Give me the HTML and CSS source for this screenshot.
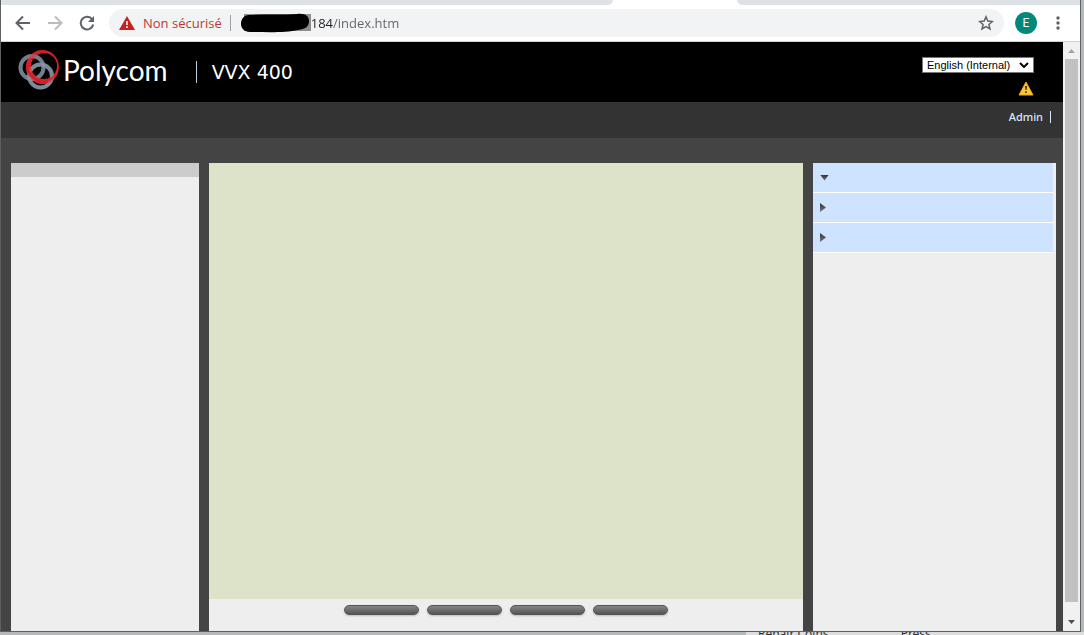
FILE: index.html
```html
<!DOCTYPE html>
<html lang="fr">
<head>
<meta charset="UTF-8">
<meta name="viewport" content="width=device-width, initial-scale=1.0">
<title>Polycom VVX 400</title>
<link rel="stylesheet" href="styles.css">
</head>
<body>

<div class="window">
    <div class="tabs">
        <div class="tab-left"></div>
        <div class="tab-right"></div>
    </div>

    <div class="toolbar">
        <button class="tool" aria-label="Back">
            <svg width="16" height="16" viewBox="0 0 16 16" fill="none" stroke="#5f6368" stroke-width="2"><path d="M15 8H2M8 1.500L1.500 8L8 14.500"/></svg>
        </button>
        <button class="tool" aria-label="Forward">
            <svg width="16" height="16" viewBox="0 0 16 16" fill="none" stroke="#babcbe" stroke-width="2"><path d="M1 8H14M8 1.500L14.500 8L8 14.500"/></svg>
        </button>
        <button class="tool" aria-label="Reload">
            <svg width="16" height="16" viewBox="0 0 16 16"><path d="M13.200 4.500A6.300 6.300 0 1 0 14.200 9.500" fill="none" stroke="#5f6368" stroke-width="2"/><path d="M15 1V7H9Z" fill="#5f6368"/></svg>
        </button>
        <div class="address">
            <svg class="danger" width="16" height="14" viewBox="0 0 16 14"><path d="M8 0L16 14H0Z" fill="#c5221f"/><path d="M7.200 5h1.600v4H7.200zM7.200 10.300h1.600v1.700H7.200z" fill="#fff"/></svg>
            <label class="insecure" for="url">Non sécurisé</label>
            <span class="divider"></span>
            <svg class="masked" width="70" height="20" viewBox="0 0 70 20"><path d="M3 1H70V18H3Z" fill="#8d8d8d"/><path d="M8 2C25 1 45 2 56 1C65 0 68 4 68 8C68 14 64 16 57 17C45 20 25 19 9 19C3 19 0 15 0 11C0 6 3 2 8 2Z" fill="#000"/></svg>
            <input class="url" id="url" type="text" value="184/index.htm">
            <button class="star" aria-label="Bookmark">
                <svg width="16" height="16" viewBox="0 0 16 16" fill="none" stroke="#5f6368" stroke-width="1.500"><path d="M8 1.800L9.800 6.100L14.400 6.500L10.900 9.500L12 14L8 11.600L4 14L5.100 9.500L1.600 6.500L6.200 6.100Z"/></svg>
            </button>
        </div>
        <button class="avatar">E</button>
        <button class="menu" aria-label="Menu">
            <svg width="4" height="14" viewBox="0 0 4 14" fill="#5f6368"><circle cx="2" cy="2" r="1.700"/><circle cx="2" cy="7" r="1.700"/><circle cx="2" cy="12" r="1.700"/></svg>
        </button>
    </div>

    <div class="view">
        <div class="page">
            <header class="header">
                <svg class="logo" width="42" height="40" viewBox="0 0 42 40" fill="none">
                    <circle cx="14" cy="17.500" r="11.500" stroke="#5d6976" stroke-width="4"/>
                    <circle cx="22.500" cy="26" r="11.500" stroke="#6d7a87" stroke-width="4"/>
                    <path fill-rule="evenodd" d="M24.500 0A16.500 17 0 1 1 24.400 0ZM26 3A13 13 0 1 0 26.100 3Z" fill="#d31f27"/>
                    <circle cx="14" cy="17.500" r="11.500" stroke="#9fb0c0" stroke-opacity=".3" stroke-width="4"/>
                    <circle cx="22.500" cy="26" r="11.500" stroke="#9fb0c0" stroke-opacity=".3" stroke-width="4"/>
                    <path d="M9 12C7 22 14 33 25 32C30 32 35 29 37 25C31 31 21 31 15 25C11 21 9 17 9 12Z" fill="#d31f27"/>
                </svg>
                <span class="brand">Polycom</span>
                <h1 class="model">VVX 400</h1>
                <div class="header-right">
                    <div class="language">
                        <select aria-label="Language">
                            <option>English (Internal)</option>
                        </select>
                        <svg class="chevron" width="10" height="6" viewBox="0 0 10 6"><path d="M1 1L5 5L9 1" fill="none" stroke="#000" stroke-width="2"/></svg>
                    </div>
                    <svg class="warning" width="16" height="15" viewBox="0 0 16 15"><path d="M8 1L15 14H1Z" fill="#fdc52f" stroke="#e9a820" stroke-linejoin="round"/><path d="M7 5h2l-.4 4H7.400zM7.200 10.300h1.600v1.700H7.200z" fill="#333"/></svg>
                </div>
            </header>

            <nav class="nav">
                <a href="#">Admin</a>
            </nav>

            <main class="content">
                <aside class="left">
                    <div class="left-title"></div>
                </aside>
                <section class="center">
                    <div class="canvas"></div>
                    <div class="buttons">
                        <button class="pill" aria-label="Cancel"></button>
                        <button class="pill" aria-label="Reset"></button>
                        <button class="pill" aria-label="View"></button>
                        <button class="pill" aria-label="Save"></button>
                    </div>
                </section>
                <aside class="right">
                    <button class="section open" aria-label="Section 1"></button>
                    <button class="section" aria-label="Section 2"></button>
                    <button class="section" aria-label="Section 3"></button>
                </aside>
            </main>
        </div>

        <div class="scrollbar">
            <svg width="17" height="17" viewBox="0 0 17 17"><path d="M5 11L8.500 7L12 11Z" fill="#a3a3a3"/></svg>
            <div class="thumb"></div>
            <svg width="17" height="20" viewBox="0 0 17 20"><path d="M5 9L8.500 13L12 9Z" fill="#505050"/></svg>
        </div>
    </div>
</div>

<!-- window lying behind the browser -->
<div class="behind">
    <div class="behind-page">
        <span>Repair Coins</span>
        <span>Press</span>
    </div>
</div>

</body>
</html>
```
FILE: styles.css
```css
* {
    box-sizing: border-box;
}

body {
    display: flex;
    flex-direction: column;
    height: 100vh;
    margin: 0;
    overflow: hidden;
    background-color: #b4b9bc;
    font-family: "Open Sans", "Noto Sans", sans-serif;
}

button {
    padding: 0;
    border: none;
    background: none;
    cursor: pointer;
}

svg {
    display: block;
    flex: none;
}

.window {
    display: flex;
    flex: 1;
    flex-direction: column;
    min-height: 0;
    margin-right: 3px;
    border: 1px solid #5d6163;
    border-top: none;
    background-color: #fff;
}

/* browser bars */
.tabs {
    display: flex;
    justify-content: space-between;
    height: 5px;
}

.tab-left,
.tab-right {
    background-color: #dee1e6;
}

.tab-left {
    flex: 612;
    margin-right: 124px;
    border-bottom-right-radius: 5px;
}

.tab-right {
    flex: 343;
    border-bottom-left-radius: 5px;
}

.toolbar {
    display: flex;
    align-items: center;
    height: 37px;
    padding: 0 20px 0 14px;
    border-bottom: 1px solid #d0d2d4;
}

.tool {
    margin-right: 16px;
}

.tool:nth-child(3) {
    margin-right: 14px;
}

.address {
    display: flex;
    flex: 1;
    align-items: center;
    height: 28px;
    padding: 0 10px;
    border-radius: 14px;
    background-color: #f1f3f4;
    font-size: 13px;
}

.insecure {
    margin-left: 8px;
    color: #b93a32;
    white-space: nowrap;
}

.divider {
    width: 1px;
    height: 16px;
    margin: 0 10px 0 8px;
    background-color: #9aa0a6;
}

.url {
    flex: 1;
    min-width: 0;
    padding: 0;
    border: none;
    outline: none;
    /* host part is darker than the path */
    background: linear-gradient(90deg, #202124 22px, #5f6368 22px);
    -webkit-background-clip: text;
    background-clip: text;
    color: transparent;
    font: inherit;
}

.avatar {
    width: 22px;
    height: 22px;
    margin: 0 19px 0 11px;
    border-radius: 50%;
    background-color: #00897b;
    color: #fff;
    font: 12px Roboto, sans-serif;
}

/* phone web page */
.view {
    display: flex;
    flex: 1;
    min-height: 0;
}

.page {
    display: flex;
    flex: 1;
    flex-direction: column;
    background-color: #444;
}

.header {
    display: flex;
    align-items: center;
    height: 60px;
    padding: 0 29px 0 17px;
    background-color: #000;
    color: #fff;
}

.logo {
    margin-bottom: 4px;
}

.brand {
    margin-left: 3px;
    padding-bottom: 4px;
    font: 28px Lato, sans-serif;
}

.model {
    margin: 0 0 0 28px;
    padding-left: 15px;
    border-left: 1px solid #b9cde0;
    font: 19px/22px "DejaVu Sans", sans-serif;
}

.header-right {
    display: flex;
    flex-direction: column;
    align-items: flex-end;
    gap: 8px;
    margin-left: auto;
    padding-top: 8px;
}

.language {
    position: relative;
}

.language select {
    display: block;
    width: 112px;
    height: 16px;
    padding: 0 4px;
    border: 1px solid #767676;
    border-radius: 0;
    appearance: none;
    background-color: #fff;
    color: #000;
    font: 11px "Liberation Sans", sans-serif;
}

.chevron {
    position: absolute;
    top: 5px;
    right: 5px;
    pointer-events: none;
}

.nav {
    display: flex;
    justify-content: flex-end;
    height: 36px;
    padding: 9px 12px 0 0;
    background-color: #333;
}

.nav a {
    height: 12px;
    padding-right: 7px;
    border-right: 1px solid #d6e8fa;
    color: #d6e8fa;
    font: 500 11px/12px "Noto Sans", sans-serif;
    text-decoration: none;
}

.content {
    display: flex;
    flex: 1;
    gap: 10px;
    padding: 25px 7px 0 10px;
}

.left,
.center,
.right {
    background-color: #eee;
}

.left {
    width: 188px;
}

.left-title {
    height: 14px;
    background-color: #ccc;
}

.center {
    display: flex;
    flex: 1;
    flex-direction: column;
}

.canvas {
    flex: 1;
    background-color: #dde3c8;
}

.buttons {
    display: flex;
    justify-content: center;
    gap: 8px;
    height: 32px;
    padding-top: 6px;
}

.pill {
    width: 75px;
    height: 10px;
    border: 1px solid #555;
    border-radius: 5px;
    background: linear-gradient(#858585, #555);
    box-shadow: 0 1px 2px #bbb;
}

.right {
    width: 243px;
    padding-right: 3px;
}

.section {
    display: flex;
    align-items: center;
    width: 100%;
    height: 30px;
    padding-left: 7px;
    border-bottom: 1px solid #fff;
    background-color: #cee3ff;
}

.section::before {
    content: "";
    width: 6px;
    height: 9px;
    background: linear-gradient(#333, #777);
    clip-path: polygon(0 0, 100% 50%, 0 100%);
}

.section.open::before {
    width: 9px;
    height: 6px;
    clip-path: polygon(0 0, 100% 0, 50% 100%);
}

.scrollbar {
    display: flex;
    flex-direction: column;
    width: 17px;
    background-color: #f1f1f1;
}

.thumb {
    flex: 1;
    margin: 0 2px 9px;
    background-color: #c1c1c1;
}

/* strip below the window */
.behind {
    height: 3px;
    overflow: hidden;
}

.behind-page {
    display: flex;
    gap: 72px;
    width: 338px;
    margin-left: auto;
    padding-left: 12px;
    background-color: #ddd;
    color: #333;
    font: 12px/3px "Noto Sans", sans-serif;
}
```
